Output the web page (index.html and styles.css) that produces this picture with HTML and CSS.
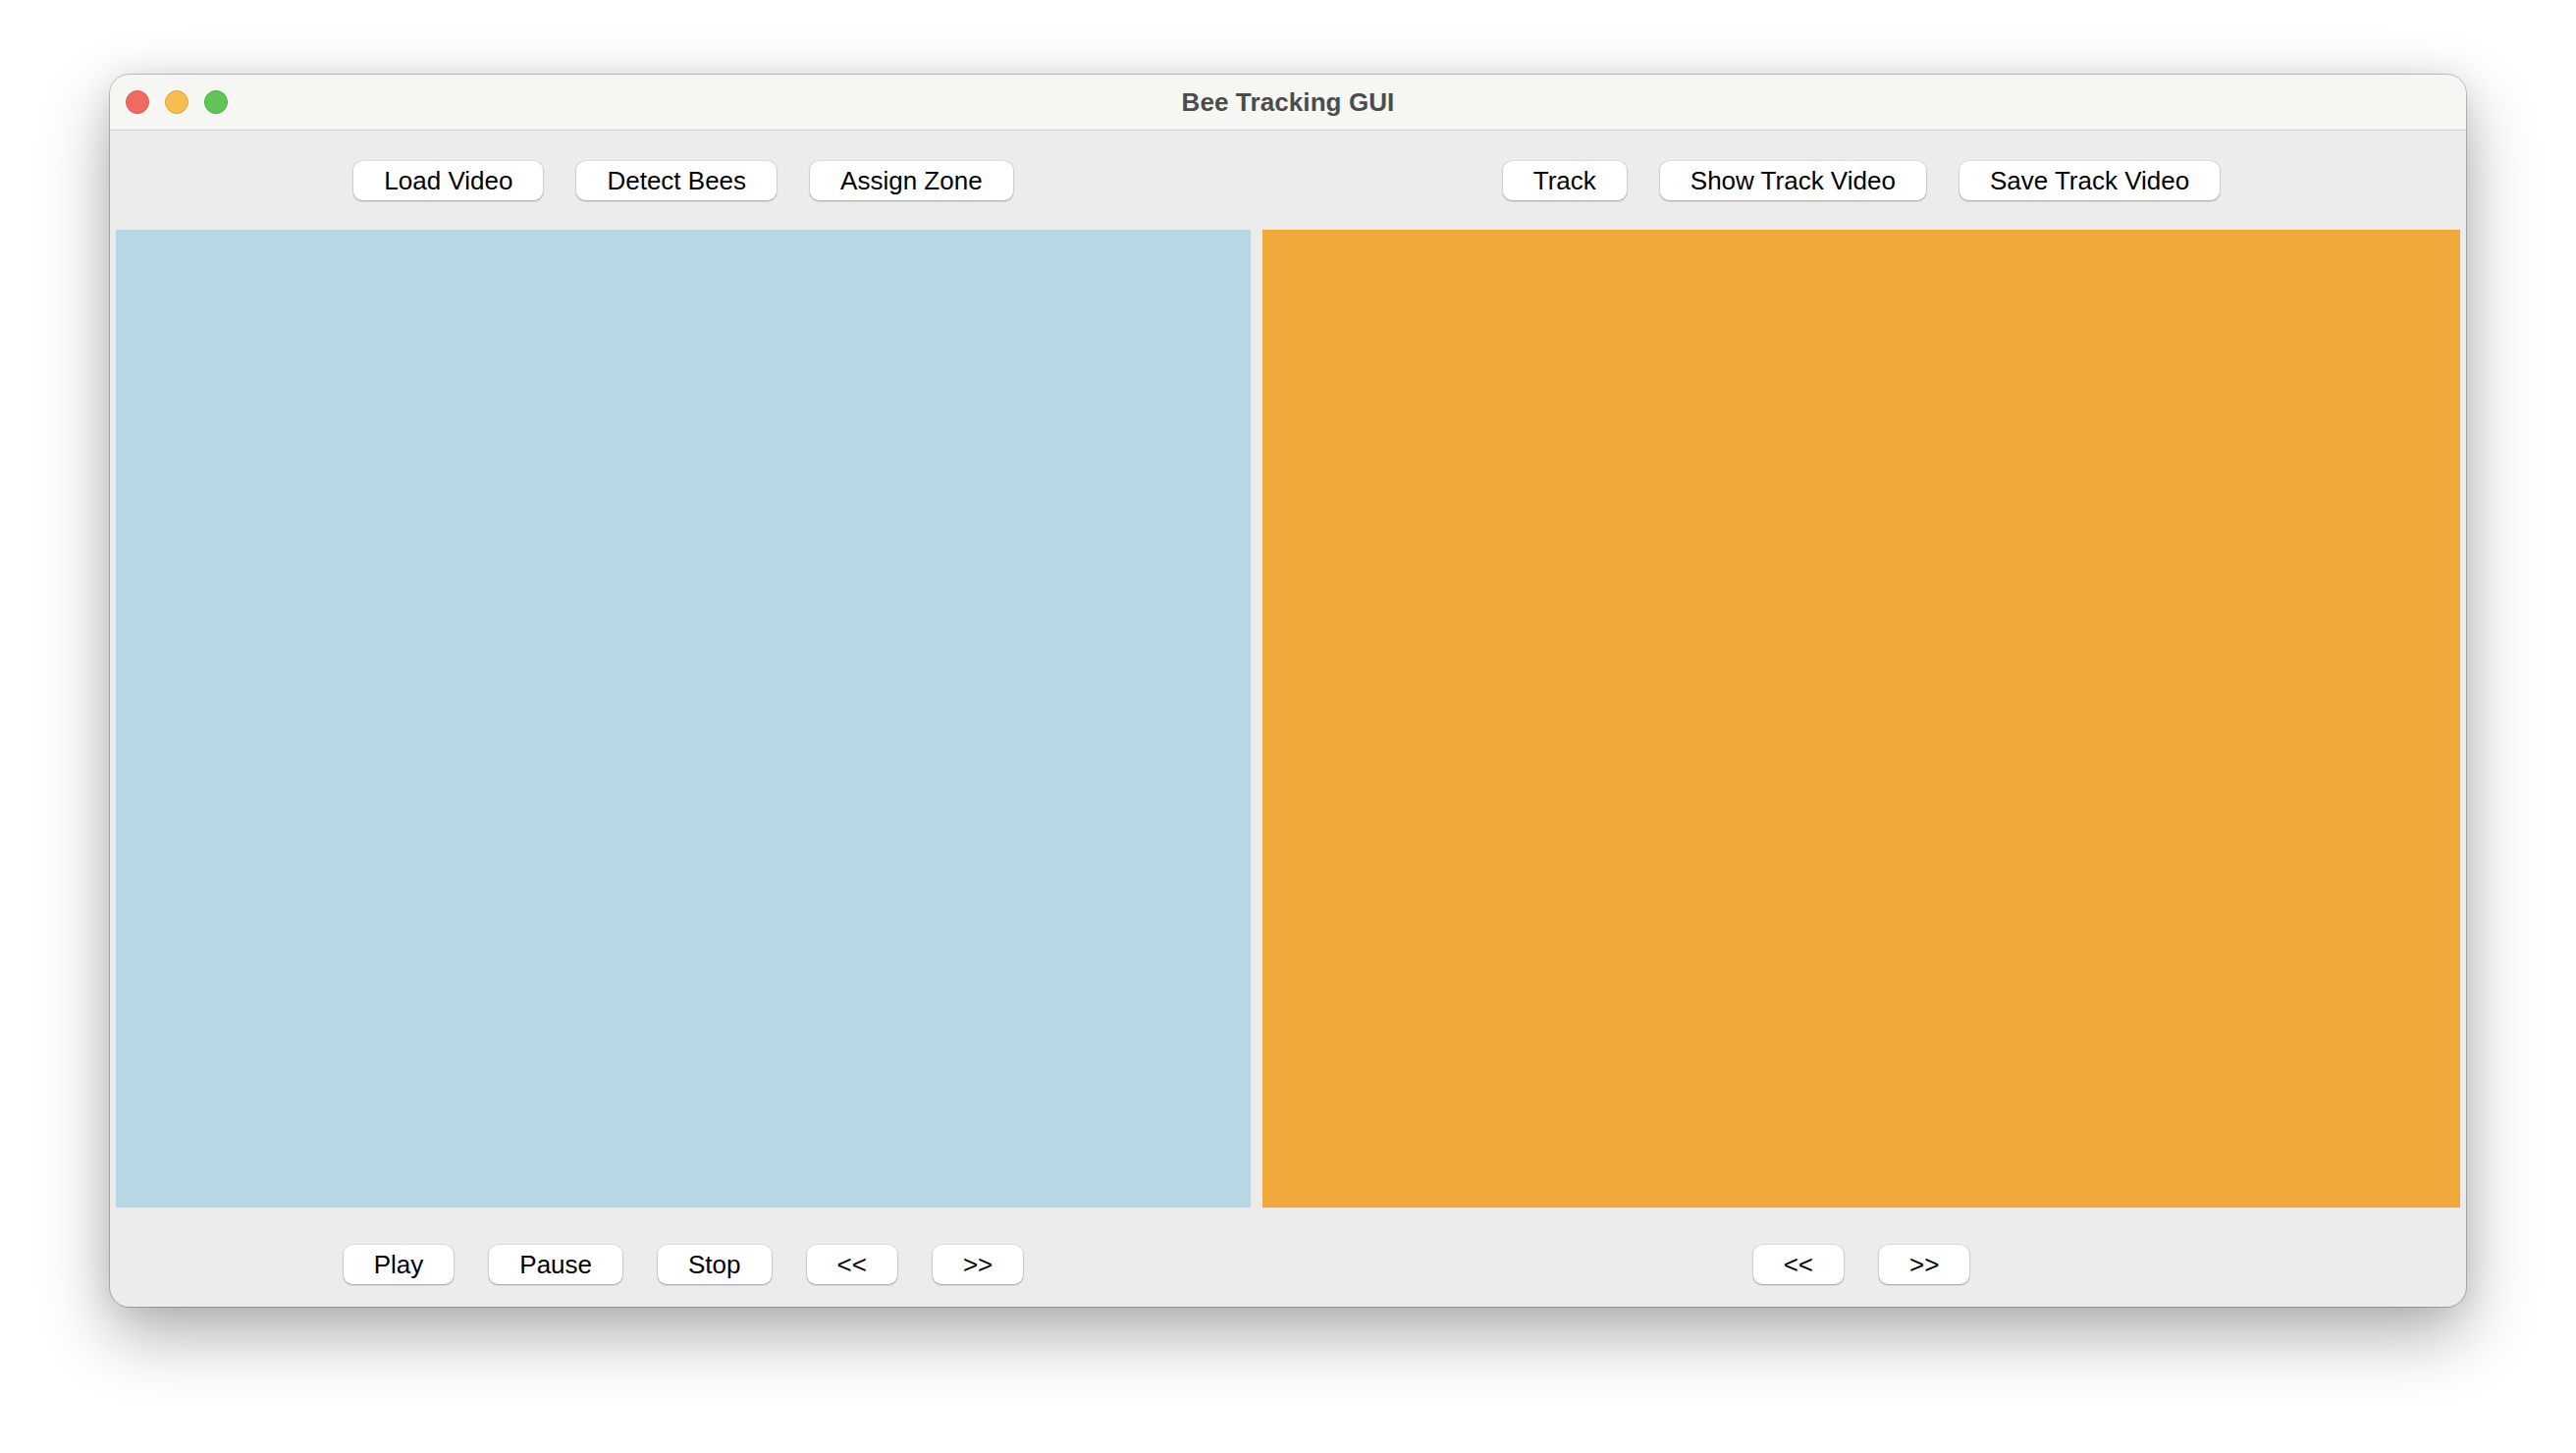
FILE: index.html
```html
<!DOCTYPE html>
<html>
<head>
<meta charset="utf-8">
<title>Bee Tracking GUI</title>
<link rel="stylesheet" href="styles.css">
</head>
<body>
<div class="window">
  <div class="titlebar">
    <div class="lights">
      <span class="light red"></span>
      <span class="light yellow"></span>
      <span class="light green"></span>
    </div>
    <div class="title">Bee Tracking GUI</div>
    <div class="spacer"></div>
  </div>
  <div class="content">
    <div class="toolbar top">
      <button class="btn">Load Video</button>
      <button class="btn">Detect Bees</button>
      <button class="btn">Assign Zone</button>
    </div>
    <div class="toolbar top">
      <button class="btn">Track</button>
      <button class="btn">Show Track Video</button>
      <button class="btn">Save Track Video</button>
    </div>
    <div class="panel blue"></div>
    <div class="panel orange"></div>
    <div class="toolbar bottom">
      <button class="btn">Play</button>
      <button class="btn">Pause</button>
      <button class="btn">Stop</button>
      <button class="btn">&lt;&lt;</button>
      <button class="btn">&gt;&gt;</button>
    </div>
    <div class="toolbar bottom">
      <button class="btn">&lt;&lt;</button>
      <button class="btn">&gt;&gt;</button>
    </div>
  </div>
</div>
</body>
</html>
```
FILE: styles.css
```css
html, body {
  margin: 0;
  padding: 0;
  background: #ffffff;
}
body {
  padding: 76px 0 0 112px;
  width: 2624px;
  height: 1480px;
  box-sizing: border-box;
  overflow: hidden;
  font-family: "Liberation Sans", Arial, sans-serif;
}
.window {
  width: 2400px;
  height: 1255px;
  border-radius: 20px;
  background: #ececec;
  box-shadow: 0 0 0 1px rgba(0,0,0,0.22), 0 28px 70px rgba(0,0,0,0.32), 0 0 30px rgba(0,0,0,0.08);
  overflow: hidden;
  display: flex;
  flex-direction: column;
}
.titlebar {
  height: 56px;
  flex: none;
  background: #f6f6f3;
  border-bottom: 1px solid #d3d3d1;
  display: grid;
  grid-template-columns: 1fr auto 1fr;
  align-items: center;
}
.lights {
  display: flex;
  gap: 16px;
  padding-left: 16px;
}
.light {
  width: 24px;
  height: 24px;
  border-radius: 50%;
  box-sizing: border-box;
}
.red { background: #ee6b60; border: 1px solid #d9574c; }
.yellow { background: #f5be4f; border: 1px solid #dea23a; }
.green { background: #61c555; border: 1px solid #4eaa41; }
.title {
  font-weight: bold;
  font-size: 26px;
  color: #4c4c4c;
  letter-spacing: 0.1px;
}
.content {
  flex: 1;
  display: grid;
  grid-template-columns: 1156px 1220px;
  grid-template-rows: 101px 996px 101px;
  column-gap: 12px;
  padding: 0 6px;
}
.toolbar {
  display: flex;
  justify-content: center;
  gap: 34px;
}
.toolbar.top {
  align-items: flex-start;
  padding-top: 31px;
}
.toolbar.bottom {
  align-items: flex-start;
  padding-top: 38px;
  gap: 36px;
}
.btn {
  height: 40px;
  padding: 0 31px;
  border: none;
  border-radius: 9px;
  background: #ffffff;
  color: #000000;
  font-family: "Liberation Sans", Arial, sans-serif;
  font-size: 26px;
  line-height: 40px;
  box-shadow: 0 0 0 0.5px rgba(0,0,0,0.12), 0 1px 2px rgba(0,0,0,0.28);
}
.panel.blue { background: #b6d7e3; }
.panel.orange { background: #f0a83b; }
```
